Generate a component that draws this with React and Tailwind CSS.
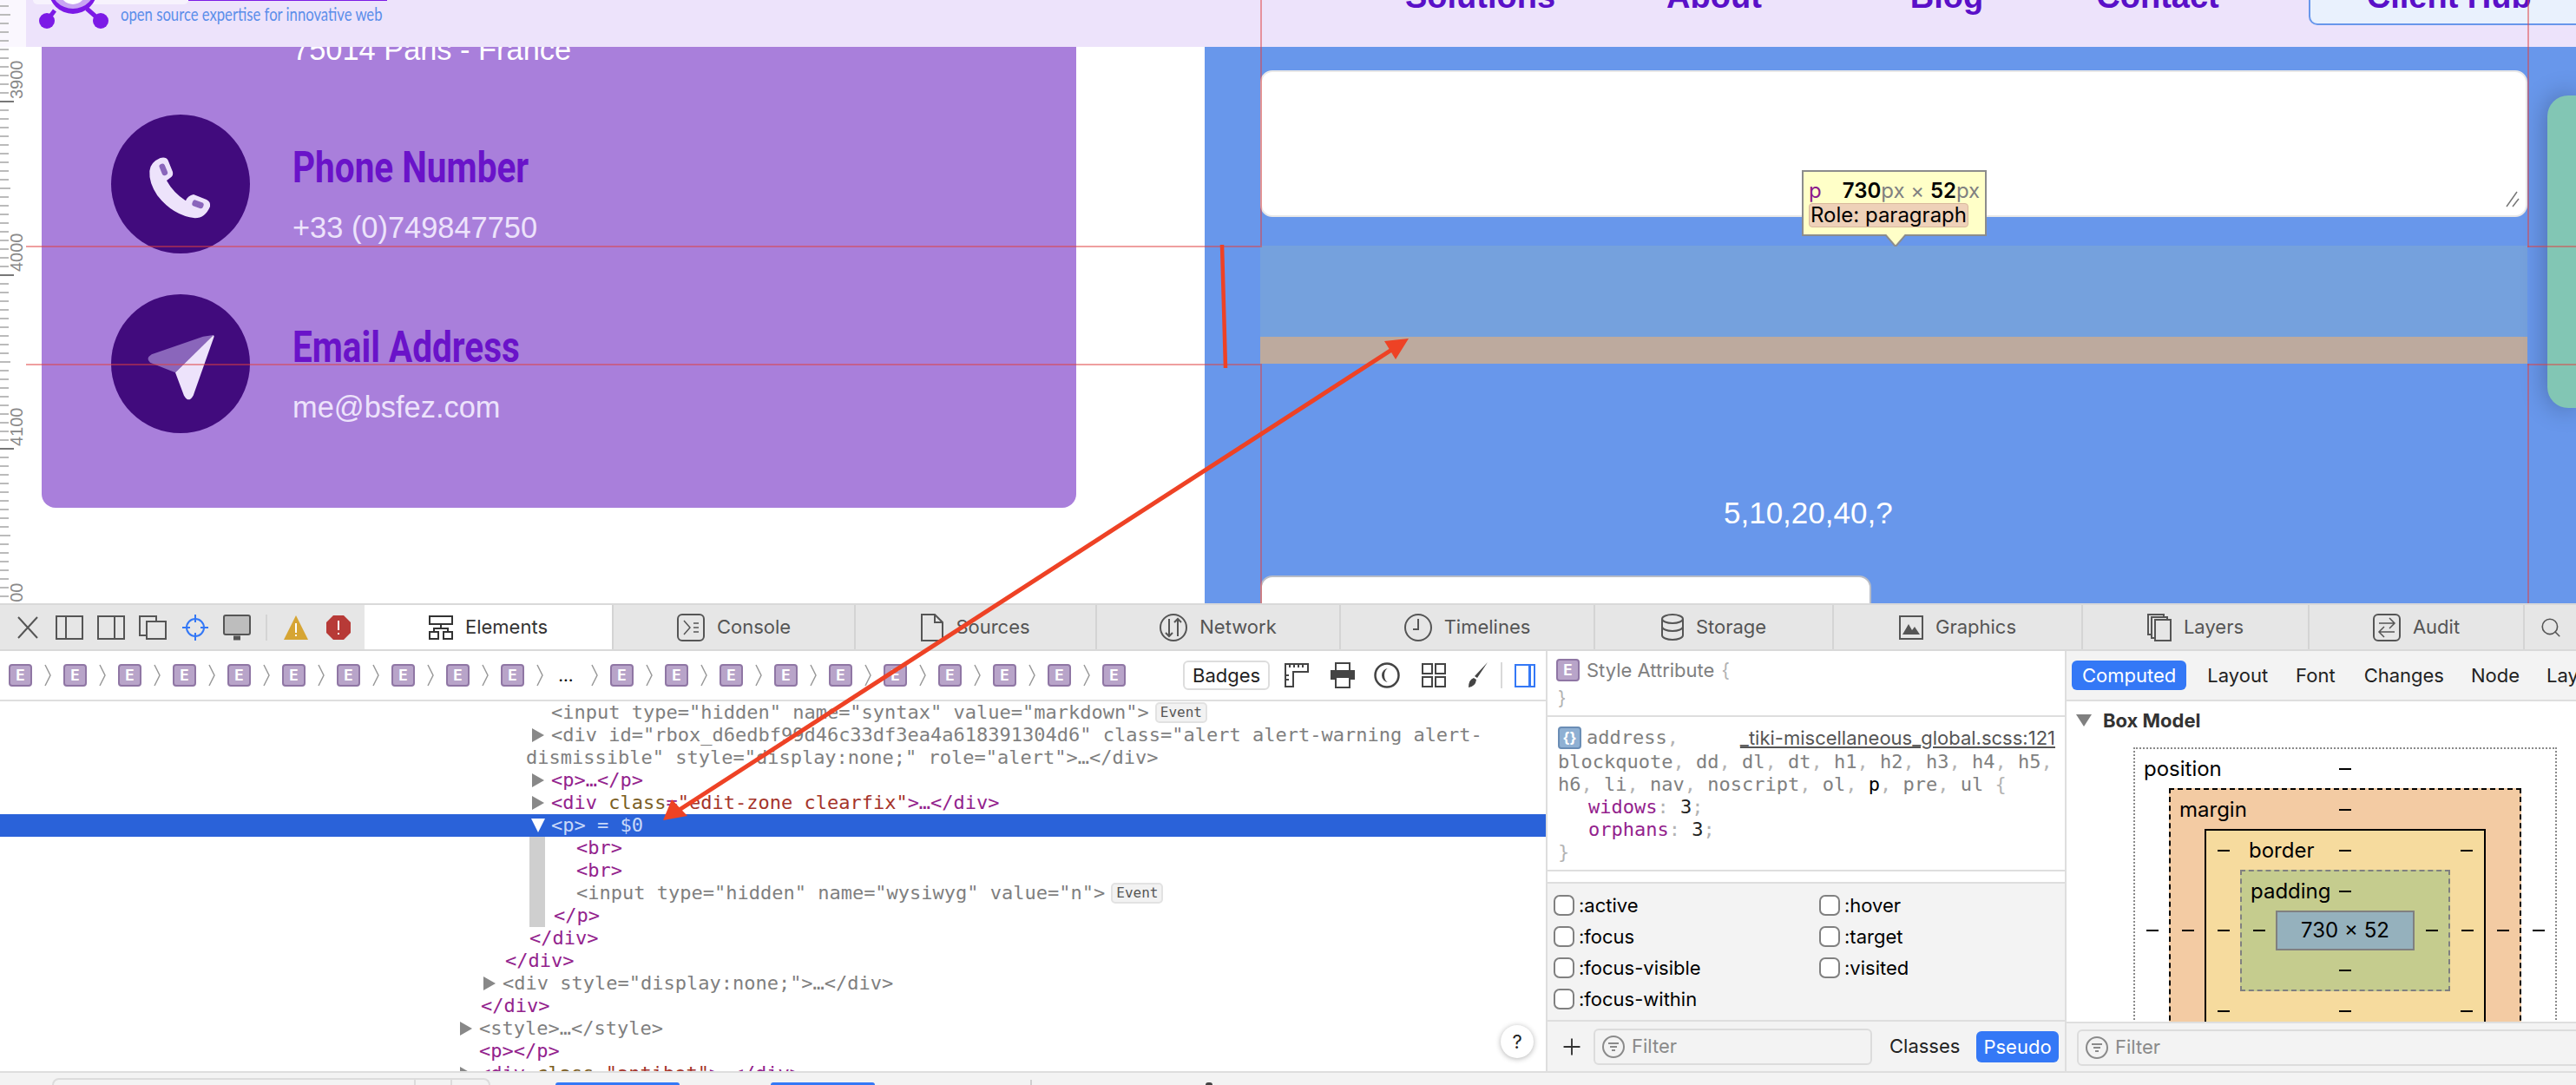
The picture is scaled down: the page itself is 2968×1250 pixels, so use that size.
import { Search, Plus } from 'lucide-react';

const TICKS = Array.from({ length: 70 }, (_, i) => i);

const Ruler = () => (
  <div className="absolute left-0 top-0 h-[695px] w-[30px] bg-white/70">
    <svg width="30" height="695" className="block">
      {TICKS.map((i) => {
        const y = 7 + i * 10;
        const major = (y - 117) % 200 === 0;
        const mid = (y - 117) % 100 === 0;
        return (
          <line key={i} x1="0" x2={major ? 16 : mid ? 12 : 10} y1={y} y2={y} stroke={major ? '#777' : '#bbb'} strokeWidth="2" />
        );
      })}
    </svg>
  </div>
);

const RulerLabel = ({ className, children }) => (
  <span className={`absolute left-[-3px] w-[44px] text-center -rotate-90 font-['Liberation_Sans',sans-serif] text-[20px] leading-[20px] text-[#888] ${className}`}>
    {children}
  </span>
);

const Logo = () => (
  <svg width="100" height="34" viewBox="0 0 100 34" className="relative block shrink-0">
    <circle cx="40" cy="-12" r="28" fill="#7c1ae6" />
    <circle cx="40" cy="-16" r="26" fill="#c9a5f3" />
    <circle cx="40" cy="-10" r="15" fill="#fff" />
    <path d="M19 12 L10 24 M56 10 L72 24" stroke="#7c1ae6" strokeWidth="5" />
    <circle cx="10" cy="24" r="9" fill="#7c1ae6" />
    <circle cx="72" cy="24" r="9" fill="#7c1ae6" />
  </svg>
);

const PhoneIcon = () => (
  <svg viewBox="0 0 480 480" className="h-full w-full">
    <path d="M170 150 Q190 145 197 158 L213 198 Q216 212 205 218 L192 228 Q215 270 258 298 Q265 280 285 276 L330 294 Q345 302 342 318 Q325 358 290 358 Q215 350 160 280 Q130 235 133 195 Q135 165 170 150 Z" fill="#ede3fb" />
    <rect x="171" y="169" width="20" height="42" rx="9" transform="rotate(-22 181 190)" fill="#8a66bb" />
    <rect x="280" y="299" width="40" height="22" rx="9" transform="rotate(20 300 310)" fill="#8a66bb" />
  </svg>
);

const SendIcon = () => (
  <svg viewBox="0 0 480 480" className="h-full w-full">
    <path d="M354 141 L318 146 L140 208 Q118 222 135 236 L222 271 Z" fill="#8a66bb" />
    <path d="M354 141 L222 271 L252 350 Q268 378 284 350 L356 146 Z" fill="#ede3fb" />
  </svg>
);

const ContactRow = ({ icon, title, value }) => (
  <div className="flex items-center gap-[49px]">
    <div className="h-[160px] w-[160px] shrink-0 rounded-full bg-[#410b7d]">{icon}</div>
    <div className="mt-[24px]">
      <div className="w-fit origin-left scale-x-[0.81] font-['Roboto',sans-serif] text-[50px] leading-[52px] font-bold whitespace-nowrap text-[#6a13c9]">{title}</div>
      <div className="mt-[23px] font-['Liberation_Sans',sans-serif] text-[34.4px] leading-[40px] text-[#ede3fb]">{value}</div>
    </div>
  </div>
);

const NavLink = ({ className, children }) => (
  <span className={`mt-[-23px] font-['Liberation_Sans',sans-serif] text-[38px] leading-[38px] font-bold whitespace-nowrap text-[#5a10c8] ${className}`}>{children}</span>
);

const TopPage = () => (
  <div className="relative flex h-[695px] shrink-0 flex-col overflow-hidden bg-white">
    <div className="relative flex h-[54px] shrink-0 overflow-hidden bg-[#ede3fb] pl-[44px]">
      <div className="absolute left-[38px] top-0 h-[5px] w-[179px] rounded-b-[6px] bg-[#f7f3fd]" />
      <Logo />
      <div className="ml-[-5px] h-[54px] w-[400px] shrink-0">
        <div className="ml-[78px] h-[1px] w-[229px] bg-[#7c1ae6]" />
        <div className="mt-[2px] w-fit origin-left scale-x-[0.758] font-['Lato',sans-serif] text-[22px] leading-[26px] whitespace-nowrap text-[#5b8eea]">open source expertise for innovative web</div>
      </div>
      <div className="ml-[1080px] flex items-start">
        <NavLink>Solutions</NavLink>
        <NavLink className="ml-[128px]">About</NavLink>
        <NavLink className="ml-[171px]">Blog</NavLink>
        <NavLink className="ml-[130px]">Contact</NavLink>
      </div>
      <div className="ml-[103px] flex h-[29px] w-[340px] shrink-0 items-start overflow-hidden rounded-b-[10px] border-2 border-t-0 border-[#6897eb] bg-[#e9f1fd] pl-[65px]">
        <NavLink>Client Hub</NavLink>
      </div>
    </div>
    <div className="flex min-h-0 flex-1">
      <div className="flex w-[1388px] shrink-0 flex-col pb-[110px] pl-[48px]">
        <div className="flex h-full w-[1192px] flex-col justify-end gap-[47px] overflow-hidden rounded-b-[16px] bg-[#a97fdb] pb-[86px] pl-[80px]">
          <div className="mb-[8px] pl-[209px] font-['Liberation_Sans',sans-serif] text-[34.4px] leading-[40px] text-white">75014 Paris - France</div>
          <ContactRow icon={<PhoneIcon />} title="Phone Number" value="+33 (0)749847750" />
          <ContactRow icon={<SendIcon />} title="Email Address" value="me@bsfez.com" />
        </div>
      </div>
      <div className="flex flex-1 bg-[#6897eb] pl-[64px]">
        <div className="w-[1460px] shrink-0 pt-[27px]">
          <div className="relative h-[169px] rounded-[14px] border-2 border-[#e8e8e8] bg-white">
            <svg width="18" height="20" className="absolute right-[6px] bottom-[8px]">
              <path d="M2 18 L14 1 M9 18 L16 9" stroke="#777" strokeWidth="1.5" />
            </svg>
          </div>
          <div className="mt-[33px] h-[105px] bg-[#75a1dd]" />
          <div className="h-[31px] bg-[#bdaa9e]" />
          <div className="pt-[152px] pl-[534px] font-['Liberation_Sans',sans-serif] text-[35px] leading-[40px] text-white">5,10,20,40,?</div>
          <div className="mt-[52px] h-[60px] w-[704px] rounded-t-[14px] border-2 border-[#b8bcc6] bg-white" />
        </div>
        <div className="mt-[56px] ml-[23px] h-[360px] flex-1 rounded-l-[24px] bg-[#82c6b4] shadow-[0_0_30px_rgba(0,0,0,0.3)]" />
      </div>
    </div>
    <Ruler />
    <RulerLabel className="top-[82px]">3900</RulerLabel>
    <RulerLabel className="top-[281px]">4000</RulerLabel>
    <RulerLabel className="top-[482px]">4100</RulerLabel>
    <RulerLabel className="top-[684px]">4200</RulerLabel>
  </div>
);

const Guides = () => (
  <>
    <div className="absolute left-[30px] top-[283px] h-[2px] w-[1422px] bg-[#e04040]/50" />
    <div className="absolute left-[30px] top-[419px] h-[2px] w-[1422px] bg-[#e04040]/50" />
    <div className="absolute left-[2912px] top-[283px] h-[2px] w-[56px] bg-[#e04040]/50" />
    <div className="absolute left-[2912px] top-[419px] h-[2px] w-[56px] bg-[#e04040]/50" />
    <div className="absolute left-[1452px] top-0 h-[285px] w-[2px] bg-[#e04040]/50" />
    <div className="absolute left-[2912px] top-0 h-[285px] w-[2px] bg-[#e04040]/50" />
    <div className="absolute left-[1452px] top-[419px] h-[276px] w-[2px] bg-[#e04040]/50" />
    <div className="absolute left-[2912px] top-[419px] h-[276px] w-[2px] bg-[#e04040]/50" />
  </>
);

const Arrows = () => (
  <svg width="2968" height="1250" className="pointer-events-none absolute top-0 left-0">
    <line x1="1408" y1="282" x2="1412" y2="424" stroke="#ee4225" strokeWidth="4.5" />
    <line x1="778" y1="936" x2="1608" y2="400" stroke="#ee4225" strokeWidth="5" />
    <polygon points="1623,390 1595,393 1608,414" fill="#ee4225" />
    <polygon points="764,945 792,940 774,921" fill="#ee4225" />
  </svg>
);

const Tooltip = () => (
  <div className="absolute left-[2076px] top-[196px] h-[76px] w-[213px] border-2 border-[#8c8c8c] bg-[#ffffc8] pt-[9px] pl-[6px] font-['Inter',sans-serif] text-[24px] leading-[26px]">
    <div className="flex whitespace-pre text-[#808080]">
      <span className="text-[#8c1b8c]">p</span>
      <span className="ml-[24px] font-semibold text-black">730</span>px × <span className="font-semibold text-black">52</span>px
    </div>
    <div className="mt-[1px] w-fit rounded-[4px] border border-[#d9b89c] bg-[#eed1b8] px-[1px] leading-[26px] whitespace-nowrap text-black">Role: paragraph</div>
    <svg width="24" height="14" className="absolute left-[94px] top-[72px]">
      <polygon points="0,0 24,0 12,14" fill="#ffffc8" />
      <path d="M0 0 L12 14 L24 0" fill="none" stroke="#8c8c8c" strokeWidth="2" />
    </svg>
  </div>
);

/* toolbar glyphs */
const Ic = ({ w = 32, h = 32, children, className = '' }) => (
  <svg width={w} height={h} viewBox={`0 0 ${w} ${h}`} fill="none" stroke="currentColor" strokeWidth="2" className={`shrink-0 ${className}`}>
    {children}
  </svg>
);

const ToolIcons = () => (
  <div className="flex w-[420px] shrink-0 items-center pl-[19px] text-[#555]">
    <Ic w={26} h={26}><path d="M2 1 L24 25 M24 1 L2 25" /></Ic>
    <Ic w={32} h={28} className="ml-[19px]"><rect x="1" y="1" width="30" height="26" /><path d="M12 1 V27" /></Ic>
    <Ic w={32} h={28} className="ml-[16px]"><rect x="1" y="1" width="30" height="26" /><path d="M20 1 V27" /></Ic>
    <Ic w={32} h={28} className="ml-[16px]"><path d="M9 23 H1 V1 H20 V6" /><rect x="9" y="7" width="22" height="20" /></Ic>
    <Ic w={32} h={32} className="ml-[17px] text-[#3478f6]"><circle cx="16" cy="16" r="10" /><path d="M16 1 V10 M16 22 V31 M1 16 H10 M22 16 H31" /></Ic>
    <Ic w={32} h={30} className="ml-[16px]"><rect x="1" y="1" width="30" height="22" rx="2" fill="#bdbdbd" /><path d="M12 27 H20" strokeWidth="5" /></Ic>
    <div className="ml-[17px] h-[30px] w-[2px] bg-[#d4d4d4]" />
    <svg width="28" height="28" viewBox="0 0 28 28" className="ml-[19px] shrink-0">
      <polygon points="14,0 28,28 0,28" fill="#d6a534" />
      <rect x="13" y="9" width="2" height="11" fill="#fff" />
      <rect x="13" y="22" width="2" height="2" fill="#fff" />
    </svg>
    <svg width="28" height="28" viewBox="0 0 28 28" className="ml-[21px] shrink-0">
      <polygon points="8,0 20,0 28,8 28,20 20,28 8,28 0,20 0,8" fill="#b73a37" />
      <rect x="13" y="6" width="2" height="11" fill="#fff" />
      <rect x="13" y="20" width="2" height="2" fill="#fff" />
    </svg>
  </div>
);

const TABS = [
  {
    label: 'Elements', w: 'w-[287px]', active: true,
    icon: <Ic w={28} h={28}><rect x="1" y="1" width="26" height="9" /><rect x="1" y="19" width="10" height="8" /><rect x="17" y="19" width="10" height="8" /><path d="M14 10 V15 M6 19 V15 H22 V19" /></Ic>,
  },
  {
    label: 'Console', w: 'w-[279px]',
    icon: <Ic w={32} h={32}><rect x="1" y="1" width="30" height="30" rx="5" /><path d="M8 8 L15 16 L8 24 M19 11 H25 M19 16 H25 M19 21 H25" strokeWidth="1.5" /></Ic>,
  },
  {
    label: 'Sources', w: 'w-[278px]',
    icon: <Ic w={26} h={32}><path d="M1 1 H16 L25 10 V31 H1 Z M16 1 V10 H25" /></Ic>,
  },
  {
    label: 'Network', w: 'w-[281px]',
    icon: <Ic w={32} h={32}><circle cx="16" cy="16" r="15" /><path d="M11 6 V26 M7 22 L11 26 L15 22 M21 26 V6 M17 10 L21 6 L25 10" /></Ic>,
  },
  {
    label: 'Timelines', w: 'w-[293px]',
    icon: <Ic w={32} h={32}><circle cx="16" cy="16" r="15" /><path d="M16 6 V18 H10" /></Ic>,
  },
  {
    label: 'Storage', w: 'w-[275px]',
    icon: <Ic w={26} h={32}><ellipse cx="13" cy="6" rx="12" ry="5" /><path d="M1 6 V15 A12 5 0 0 0 25 15 V6 M1 15 V25 A12 5 0 0 0 25 25 V15" /></Ic>,
  },
  {
    label: 'Graphics', w: 'w-[287px]',
    icon: <Ic w={28} h={28}><rect x="1" y="1" width="26" height="26" /><path d="M4 22 L11 10 L15 17 L18 13 L24 22 Z" fill="currentColor" stroke="none" /></Ic>,
  },
  {
    label: 'Layers', w: 'w-[261px]',
    icon: <Ic w={28} h={32}><rect x="1" y="1" width="18" height="23" /><rect x="5" y="4" width="18" height="24" fill="#e6e6e6" /><rect x="9" y="7" width="18" height="24" fill="#e6e6e6" /></Ic>,
  },
  {
    label: 'Audit', w: 'w-[248px]',
    icon: <Ic w={32} h={32}><rect x="1" y="1" width="30" height="30" rx="5" /><path d="M7 11 H25 M19 5 L25 11 L19 17 M25 21 H7 M13 15 L7 21 L13 27" strokeWidth="1.5" /></Ic>,
  },
];

const TabBar = () => (
  <div className="flex h-[55px] shrink-0 border-y-2 border-[#d9d9d9] bg-[#e6e6e6] font-['Inter',sans-serif] text-[22px] text-[#555]">
    <ToolIcons />
    {TABS.map((t) => (
      <div key={t.label} className={`flex ${t.w} shrink-0 items-center justify-center gap-[14px] border-r-2 border-[#d4d4d4] ${t.active ? 'bg-white text-[#333]' : ''}`}>
        {t.icon}
        {t.label}
      </div>
    ))}
    <div className="flex flex-1 items-center justify-center">
      <Search size={26} strokeWidth={1.5} />
    </div>
  </div>
);

const EBadge = ({ blue, label = 'E' }) => (
  <span className={`flex h-[26px] w-[27px] shrink-0 items-center justify-center rounded-[4px] border-2 font-['Inter',sans-serif] text-[17px] leading-none font-bold text-white ${blue ? 'border-[#6a8db5] bg-[#8fb0d3]' : 'border-[#8f76a4] bg-[#b8a4c9]'}`}>
    {label}
  </span>
);

const Chevron = () => (
  <svg width="10" height="26" className="mx-[13px] shrink-0">
    <path d="M2 1 L8 13 L2 25" fill="none" stroke="#999" strokeWidth="1.5" />
  </svg>
);

const CRUMBS_A = Array.from({ length: 10 }, (_, i) => i);

const Breadcrumbs = () => (
  <div className="flex h-[58px] shrink-0 items-center border-b-2 border-[#dedede] pl-[10px]">
    {CRUMBS_A.map((i) => (
      <span key={i} className="flex items-center"><EBadge /><Chevron /></span>
    ))}
    <span className="ml-[-3px] w-[30px] text-center font-['Inter',sans-serif] text-[20px] text-black">…</span>
    {CRUMBS_A.map((i) => (
      <span key={i} className="flex items-center"><Chevron /><EBadge /></span>
    ))}
    <span className="ml-[66px] rounded-[6px] border-2 border-[#dddddd] px-[9px] font-['Inter',sans-serif] text-[22px] leading-[30px] text-[#222]">Badges</span>
    <Ic w={28} h={28} className="ml-[17px] text-[#444]"><path d="M1 27 V1 H27 V10 H10 V27 Z M6 1 V5 M11 1 V5 M16 1 V5 M21 1 V5 M1 14 H5 M1 19 H5" /></Ic>
    <svg width="30" height="30" viewBox="0 0 30 30" className="ml-[24px] shrink-0 text-[#444]">
      <rect x="7" y="1" width="16" height="9" fill="none" stroke="currentColor" strokeWidth="2" />
      <rect x="1" y="9" width="28" height="11" fill="currentColor" />
      <rect x="7" y="17" width="16" height="12" fill="#fff" stroke="currentColor" strokeWidth="2" />
    </svg>
    <svg width="30" height="30" viewBox="0 0 30 30" className="ml-[21px] shrink-0 text-[#444]">
      <circle cx="15" cy="15" r="13.5" fill="none" stroke="currentColor" strokeWidth="2.5" />
      <path d="M17 7 A8 8 0 0 0 17 23 A5 8 0 0 1 17 7 Z" fill="currentColor" />
    </svg>
    <Ic w={28} h={28} className="ml-[25px] text-[#444]"><rect x="1" y="1" width="11" height="11" /><rect x="16" y="1" width="11" height="11" /><rect x="1" y="16" width="11" height="11" /><rect x="16" y="16" width="11" height="11" /></Ic>
    <svg width="26" height="30" viewBox="0 0 26 30" className="ml-[24px] shrink-0 text-[#444]">
      <path d="M24 0 L12 18 L9 16 Z" fill="currentColor" />
      <path d="M8 18 Q2 20 2 29 Q10 28 11 20 Z" fill="currentColor" />
    </svg>
    <div className="ml-[13px] h-[30px] w-[2px] bg-[#d9d9d9]" />
    <div className="ml-[14px] flex h-[27px] w-[24px] shrink-0 justify-end border-2 border-[#3478f6] pr-[3px]">
      <div className="h-full w-[3px] bg-[#3478f6]" />
    </div>
  </div>
);

const Caret = ({ down, white }) => (
  <svg width="23" height="18" className="shrink-0">
    {down ? (
      <polygon points="0,1 16,1 8,17" fill={white ? '#fff' : '#888'} />
    ) : (
      <polygon points="1,1 15,9 1,17" fill="#888" />
    )}
  </svg>
);

const Row = ({ indent, caret, selected, children }) => (
  <div className={`flex h-[26px] shrink-0 items-center whitespace-pre font-['DejaVu_Sans_Mono',monospace] text-[22px] leading-[26px] ${indent} ${selected ? 'bg-[#2a62d9] text-[#c8d8f8]' : 'text-[#7f7f7f]'}`}>
    {caret && <Caret down={selected} white={selected} />}
    {children}
  </div>
);

const Tag = ({ children }) => <span className="text-[#93228d]">{children}</span>;

const EventPill = ({ className }) => (
  <span className={`rounded-[5px] border-2 border-[#e2e2e2] bg-[#f2f2f2] px-[4px] font-['DejaVu_Sans_Mono',monospace] text-[16px] leading-[20px] text-[#555] ${className}`}>Event</span>
);

const Dom = () => (
  <div className="relative flex min-h-0 flex-1 flex-col overflow-hidden">
    <Row indent="pl-[635px]">{'<input type="hidden" name="syntax" value="markdown">'}<EventPill className="ml-[7px]" /></Row>
    <Row indent="pl-[612px]" caret>{'<div id="rbox_d6edbf99d46c33df3ea4a618391304d6" class="alert alert-warning alert-'}</Row>
    <Row indent="pl-[606px]">{'dismissible" style="display:none;" role="alert">…</div>'}</Row>
    <Row indent="pl-[612px]" caret><Tag>{'<p>…</p>'}</Tag></Row>
    <Row indent="pl-[612px]" caret>
      <Tag>{'<div '}</Tag>
      <span className="text-[#7b5e24]">class</span>
      <Tag>=</Tag>
      <span className="text-[#a5342a]">"edit-zone clearfix"</span>
      <Tag>{'>…</div>'}</Tag>
    </Row>
    <Row indent="pl-[612px]" caret selected>{'<p> = $0'}</Row>
    <div className="relative">
      <div className="absolute left-[610px] top-0 h-[104px] w-[18px] bg-[#cfcfcf]" />
      <Row indent="pl-[664px]"><Tag>{'<br>'}</Tag></Row>
      <Row indent="pl-[664px]"><Tag>{'<br>'}</Tag></Row>
      <Row indent="pl-[664px]">{'<input type="hidden" name="wysiwyg" value="n">'}<EventPill className="ml-[7px]" /></Row>
      <Row indent="pl-[638px]"><Tag>{'</p>'}</Tag></Row>
    </div>
    <Row indent="pl-[610px]"><Tag>{'</div>'}</Tag></Row>
    <Row indent="pl-[582px]"><Tag>{'</div>'}</Tag></Row>
    <Row indent="pl-[556px]" caret>{'<div style="display:none;">…</div>'}</Row>
    <Row indent="pl-[554px]"><Tag>{'</div>'}</Tag></Row>
    <Row indent="pl-[529px]" caret>{'<style>…</style>'}</Row>
    <Row indent="pl-[552px]"><Tag>{'<p></p>'}</Tag></Row>
    <Row indent="pl-[529px]" caret>
      <Tag>{'<div '}</Tag>
      <span className="text-[#7b5e24]">class</span>
      <Tag>=</Tag>
      <span className="text-[#a5342a]">"antibot"</span>
      <Tag>{'>…</div>'}</Tag>
    </Row>
    <div className="absolute left-[1729px] top-[373px] flex h-[38px] w-[38px] items-center justify-center rounded-full bg-white font-['Inter',sans-serif] text-[22px] text-[#222] shadow-[0_1px_6px_rgba(0,0,0,0.3)]">?</div>
  </div>
);

const FilterIcon = () => (
  <svg width="26" height="26" viewBox="0 0 26 26" className="shrink-0" fill="none" stroke="#8a8a8a" strokeWidth="2">
    <circle cx="13" cy="13" r="12" />
    <path d="M7 9 H19 M9 13 H17 M11 17 H15" />
  </svg>
);

const FilterInput = ({ className }) => (
  <div className={`flex h-[42px] items-center gap-[8px] rounded-[6px] border-2 border-[#dcdcdc] pl-[8px] font-['Inter',sans-serif] text-[22px] text-[#8a8a8a] ${className}`}>
    <FilterIcon />
    Filter
  </div>
);

const Check = ({ label }) => (
  <div className="flex h-[36px] items-center gap-[5px]">
    <span className="h-[24px] w-[24px] rounded-[7px] border-2 border-[#808080] bg-white" />
    {label}
  </div>
);

const Comma = () => <span className="text-[#b3b3b3]">, </span>;
const Selectors = ['blockquote', 'dd', 'dl', 'dt', 'h1', 'h2', 'h3', 'h4', 'h5'];
const Selectors2 = ['h6', 'li', 'nav', 'noscript', 'ol', 'p', 'pre', 'ul'];

const StylesPanel = () => (
  <div className="flex w-[600px] shrink-0 flex-col border-x-2 border-[#dedede]">
    <div className="h-[76px] shrink-0 border-b-2 border-[#dedede] pt-[9px] pl-[10px] font-['Inter',sans-serif] text-[22px] leading-[26px] text-[#808080]">
      <div className="flex items-center gap-[8px]"><EBadge />Style Attribute <span className="text-[#b3b3b3]">{'{'}</span></div>
      <div className="mt-[6px] pl-[2px] text-[#b3b3b3]">{'}'}</div>
    </div>
    <div className="h-[178px] shrink-0 border-b-2 border-[#dedede] pt-[11px] pl-[12px] font-['DejaVu_Sans_Mono',monospace] text-[22px] leading-[26px] text-[#808080]">
      <div className="mb-[2px] flex items-center pr-[11px]">
        <EBadge blue label="{}" />
        <span className="ml-[6px]">address<Comma /></span>
        <span className="ml-auto font-['Inter',sans-serif] text-[#555] underline">_tiki-miscellaneous_global.scss:121</span>
      </div>
      <div>{Selectors.map((s) => <span key={s}>{s}<Comma /></span>)}</div>
      <div>
        {Selectors2.map((s) => (
          <span key={s} className={s === 'p' ? 'text-black' : ''}>{s}{s !== 'ul' && <Comma />}</span>
        ))}
        <span className="text-[#b3b3b3]">{' {'}</span>
      </div>
      <div className="pl-[35px]"><Tag>widows</Tag><span className="text-[#b3b3b3]">: </span><span className="text-[#222]">3</span><span className="text-[#b3b3b3]">;</span></div>
      <div className="pl-[35px]"><Tag>orphans</Tag><span className="text-[#b3b3b3]">: </span><span className="text-[#222]">3</span><span className="text-[#b3b3b3]">;</span></div>
      <div className="text-[#b3b3b3]">{'}'}</div>
    </div>
    <div className="h-[12px] shrink-0" />
    <div className="grid h-[161px] shrink-0 grid-cols-[306px_1fr] content-start border-y-2 border-[#dedede] bg-[#f3f3f3] pt-[7px] pl-[7px] font-['Inter',sans-serif] text-[22px] text-black">
      <Check label=":active" />
      <Check label=":hover" />
      <Check label=":focus" />
      <Check label=":target" />
      <Check label=":focus-visible" />
      <Check label=":visited" />
      <Check label=":focus-within" />
    </div>
    <div className="flex min-h-0 flex-1 items-center bg-[#f3f3f3] pl-[13px] font-['Inter',sans-serif] text-[22px]">
      <Plus size={30} strokeWidth={1.5} className="shrink-0 text-[#333]" />
      <FilterInput className="ml-[10px] w-[321px] shrink-0" />
      <span className="ml-[20px] text-[#222]">Classes</span>
      <span className="ml-[19px] rounded-[6px] bg-[#3478f6] px-[8px] leading-[36px] text-white">Pseudo</span>
    </div>
  </div>
);

const Dash = () => <span className="block h-[2px] w-[14px] bg-black" />;

const Side = ({ children }) => (
  <div className="flex w-[39px] shrink-0 items-center justify-center">{children}</div>
);

const Box = ({ className, label, corners, children }) => (
  <div className={className}>
    <div className="grid h-[45px] grid-cols-[1fr_auto_1fr] items-center">
      <div className="flex items-center pl-[10px]">
        {corners && <span className="mr-[22px] ml-[3px]"><Dash /></span>}
        <span className="leading-none">{label}</span>
      </div>
      <Dash />
      <div className="flex justify-end pr-[13px]">{corners && <Dash />}</div>
    </div>
    <div className="flex">
      <Side><Dash /></Side>
      <div className="min-w-0 flex-1">{children}</div>
      <Side><Dash /></Side>
    </div>
    <div className="relative flex h-[45px] items-center justify-center">
      <Dash />
      {corners && <span className="absolute left-[13px]"><Dash /></span>}
      {corners && <span className="absolute right-[13px]"><Dash /></span>}
    </div>
  </div>
);

const ComputedPanel = () => (
  <div className="flex min-w-0 flex-1 flex-col font-['Inter',sans-serif] text-[22px]">
    <div className="flex h-[58px] shrink-0 items-center overflow-hidden border-b-2 border-[#dedede] bg-[#f3f3f3] pl-[6px] text-[#222]">
      <span className="rounded-[6px] bg-[#3478f6] px-[12px] leading-[34px] text-white">Computed</span>
      <span className="ml-[24px]">Layout</span>
      <span className="ml-[32px]">Font</span>
      <span className="ml-[33px]">Changes</span>
      <span className="ml-[31px]">Node</span>
      <span className="ml-[31px]">Layers</span>
    </div>
    <div className="min-h-0 flex-1 overflow-hidden pt-[9px]">
      <div className="flex items-center pl-[11px] font-bold text-[#333]">
        <svg width="18" height="16" className="shrink-0"><polygon points="0,1 18,1 9,15" fill="#808080" /></svg>
        <span className="ml-[13px] leading-[26px]">Box Model</span>
      </div>
      <Box className="mt-[18px] ml-[77px] w-[488px] border-2 border-dotted border-[#8a8a8a] text-[24px] text-black" label="position">
        <Box className="border-2 border-dashed border-black bg-[#f3cba3]" label="margin">
          <Box className="border-2 border-black bg-[#f6db9e]" label="border" corners>
            <Box className="border-2 border-dashed border-[#808080] bg-[#c5cc8e]" label="padding">
              <div className="flex h-[46px] items-center justify-center border-2 border-[#808080] bg-[#95b1bd]">730 × 52</div>
            </Box>
          </Box>
        </Box>
      </Box>
    </div>
    <div className="flex h-[57px] shrink-0 items-center border-t-2 border-[#dedede] bg-[#f3f3f3] pl-[12px]">
      <FilterInput className="w-[600px] shrink-0" />
    </div>
  </div>
);

const BottomBar = () => (
  <div className="flex h-[16px] shrink-0 items-end overflow-hidden border-t-2 border-[#dedede] bg-[#f3f3f3] pl-[60px]">
    <div className="flex h-[8px] w-[505px] shrink-0 justify-end rounded-t-[8px] border-x-2 border-t-2 border-[#dcdcdc]">
      <div className="mr-[40px] w-[2px] bg-[#dcdcdc]" />
      <div className="mr-[42px] w-[2px] bg-[#dcdcdc]" />
    </div>
    <div className="ml-[75px] h-[3px] w-[143px] shrink-0 rounded-t-[6px] bg-[#3478f6]" />
    <div className="ml-[105px] h-[3px] w-[120px] shrink-0 rounded-t-[6px] bg-[#3478f6]" />
    <div className="ml-[179px] h-[6px] w-[2px] shrink-0 bg-[#cfcfcf]" />
    <div className="ml-[200px] h-[3px] w-[8px] shrink-0 rounded-t-full bg-[#444]" />
  </div>
);

const DevTools = () => (
  <div className="flex min-h-0 flex-1 flex-col bg-white">
    <TabBar />
    <div className="flex min-h-0 flex-1">
      <div className="flex w-[1781px] shrink-0 flex-col">
        <Breadcrumbs />
        <Dom />
      </div>
      <StylesPanel />
      <ComputedPanel />
    </div>
    <BottomBar />
  </div>
);

export default function App() {
  return (
    <div className="relative flex h-[1250px] w-[2968px] flex-col overflow-hidden bg-white">
      <TopPage />
      <DevTools />
      <Guides />
      <Tooltip />
      <Arrows />
    </div>
  );
}
